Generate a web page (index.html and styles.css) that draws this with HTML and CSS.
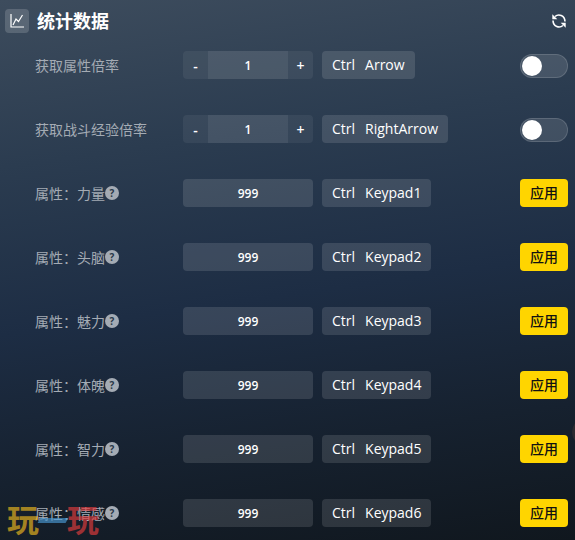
FILE: index.html
```html
<!DOCTYPE html>
<html lang="zh-CN">
<head>
  <meta charset="UTF-8" />
  <meta name="viewport" content="width=device-width, initial-scale=1" />
  <title>统计数据</title>
  <link rel="stylesheet" href="styles.css">
</head>
<body>

  <header class="header">
    <span class="header-icon">
      <svg width="14" height="14" viewBox="0 0 14 14" fill="none" stroke="#fff" stroke-width="1.2">
        <path d="M1 0v13h13" />
        <path d="M3 11l3-6 2.500 2.500L12.500 1" />
      </svg>
    </span>
    <h1>统计数据</h1>
    <button class="refresh" aria-label="刷新">
      <svg width="16" height="16" viewBox="0 0 16 16" fill="none" stroke="#fff" stroke-width="1.600">
        <path d="M4 3.500C7.500 .6 13.800 2 14 8.500" />
        <path d="M12 12.500C8.500 15.400 2.200 14 2 7.500" />
        <path d="M1.300 1.200v5h5z" fill="#fff" stroke="none" />
        <path d="M14.700 14.800v-5h-5z" fill="#fff" stroke="none" />
      </svg>
    </button>
  </header>

  <main class="rows" id="rows">
    <div class="row">
      <label class="name" for="rate1">获取属性倍率</label>
      <div class="stepper">
        <button aria-label="减少">-</button>
        <input type="text" id="rate1" value="1" />
        <button aria-label="增加">+</button>
      </div>
      <div class="hotkey"><span>Ctrl</span><span>Arrow</span></div>
      <input type="checkbox" class="switch" aria-label="获取属性倍率" />
    </div>
    <div class="row">
      <label class="name" for="rate2">获取战斗经验倍率</label>
      <div class="stepper">
        <button aria-label="减少">-</button>
        <input type="text" id="rate2" value="1" />
        <button aria-label="增加">+</button>
      </div>
      <div class="hotkey"><span>Ctrl</span><span>RightArrow</span></div>
      <input type="checkbox" class="switch" aria-label="获取战斗经验倍率" />
    </div>
  </main>

  <div class="watermark" aria-hidden="true"><span class="gold">玩</span><span class="dash"></span><span class="red">玩</span></div>
  <div class="float-dot"></div>

  <script>
    const attrs = ["力量", "头脑", "魅力", "体魄", "智力", "情感"];

    const rows = document.getElementById("rows");
    attrs.forEach((name, i) => {
      const n = i + 1;
      const row = document.createElement("div");
      row.className = "row";
      row.innerHTML = `
        <label class="name" for="attr${n}">属性：${name}<span class="help">?</span></label>
        <input type="text" class="value" id="attr${n}" value="999" />
        <div class="hotkey"><span>Ctrl</span><span>Keypad${n}</span></div>
        <button class="apply">应用</button>`;
      rows.appendChild(row);
    });
  </script>

</body>
</html>
```

FILE: styles.css
```css
* {
  box-sizing: border-box;
}
body {
  position: relative;
  margin: 0;
  min-height: 100vh;
  overflow: hidden;
  font-family: "Open Sans", "Noto Sans CJK SC", sans-serif;
  font-size: 14px;
  color: #fff;
  background: linear-gradient(172deg, #3d4c5d 0%, #2b3c50 27%, #1d2d44 54%, #16212f 78%, #10171e 100%);
}
button, input {
  margin: 0;
  padding: 0;
  border: none;
  font-family: inherit;
  color: inherit;
}
button {
  cursor: pointer;
}
.header {
  display: flex;
  align-items: center;
  padding: 9px 8px 0 5px;
}
.header-icon {
  display: flex;
  align-items: center;
  justify-content: center;
  width: 24px;
  height: 24px;
  border-radius: 4px;
  background: rgba(255, 255, 255, 0.16);
}
h1 {
  margin: 0 0 0 8px;
  font-size: 18px;
  line-height: 24px;
  font-weight: bold;
}
.refresh {
  display: flex;
  margin-left: auto;
  background: none;
}
.rows {
  display: flex;
  flex-direction: column;
  gap: 36px;
  padding: 18px 7px 13px 35px;
}
.row {
  display: flex;
  align-items: center;
  height: 28px;
}
.name {
  display: flex;
  align-items: center;
  width: 148px;
  color: #a4abb4;
}
.help {
  width: 14px;
  height: 14px;
  border-radius: 50%;
  background: #a4abb4;
  color: #2a3848;
  font-size: 10px;
  line-height: 14px;
  font-weight: bold;
  text-align: center;
}
.stepper {
  display: flex;
  width: 130px;
  height: 28px;
  border-radius: 4px;
  overflow: hidden;
}
.stepper button {
  width: 25px;
  background: rgba(255, 255, 255, 0.06);
  font-size: 14px;
  font-weight: 600;
}
.stepper input {
  flex: 1;
  min-width: 0;
  background: rgba(255, 255, 255, 0.12);
  font-size: 12px;
  font-weight: 600;
  text-align: center;
}
.value {
  width: 130px;
  height: 28px;
  border-radius: 4px;
  background: rgba(255, 255, 255, 0.12);
  font-size: 12px;
  font-weight: 600;
  text-align: center;
}
.hotkey {
  display: flex;
  gap: 10px;
  height: 28px;
  margin-left: 9px;
  padding: 0 10px;
  border-radius: 4px;
  background: rgba(255, 255, 255, 0.12);
  font-weight: 500;
  line-height: 28px;
}
.switch {
  appearance: none;
  display: flex;
  align-items: center;
  width: 48px;
  height: 24px;
  margin-top: 2px;
  margin-left: auto;
  padding: 1px;
  border: 1px solid rgba(255, 255, 255, 0.14);
  border-radius: 12px;
  background: rgba(255, 255, 255, 0.12);
  cursor: pointer;
}
.switch::before {
  content: "";
  width: 20px;
  height: 20px;
  border-radius: 50%;
  background: #fff;
}
.switch:checked {
  justify-content: flex-end;
  background: #ffd500;
}
.apply {
  width: 48px;
  height: 28px;
  padding-bottom: 2px;
  margin-left: auto;
  border-radius: 4px;
  background: #ffd500;
  color: #111;
  font-size: 14px;
  font-weight: 500;
}
.watermark {
  position: absolute;
  left: 7px;
  bottom: 3px;
  display: flex;
  align-items: center;
  font-size: 32px;
  line-height: 34px;
  font-weight: bold;
  opacity: 0.65;
  pointer-events: none;
}
.gold {
  color: #f0b91e;
}
.dash {
  width: 28px;
  height: 5px;
  background: #4a9ad4;
  transform: skewX(-30deg);
}
.red {
  color: #e63c3c;
}
.float-dot {
  position: absolute;
  right: -25px;
  bottom: 94px;
  width: 28px;
  height: 28px;
  border-radius: 50%;
  background: #2b2a30;
}
```
